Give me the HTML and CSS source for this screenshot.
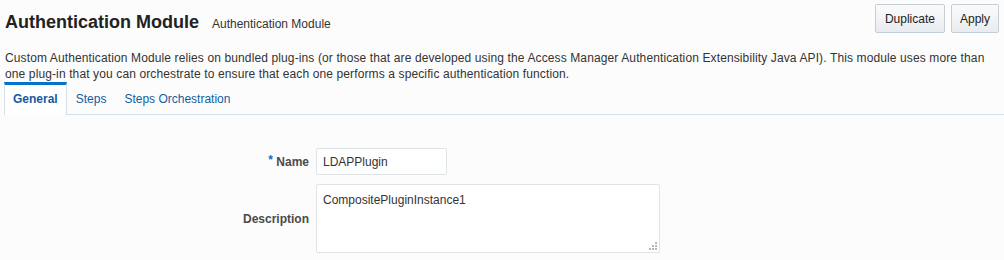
FILE: index.html
```html
<!DOCTYPE html>
<html>
<head>
<meta charset="utf-8">
<link rel="stylesheet" href="styles.css">
</head>
<body>
<div class="page">
  <div class="header">
    <div class="titles">
      <h1 class="title">Authentication Module</h1>
      <span class="subtitle">Authentication Module</span>
    </div>
    <div class="actions">
      <button class="btn btn-dup">Duplicate</button>
      <button class="btn">Apply</button>
    </div>
  </div>
  <p class="desc">Custom Authentication Module relies on bundled plug-ins (or those that are developed using the Access Manager Authentication Extensibility Java API). This module uses more than one plug-in that you can orchestrate to ensure that each one performs a specific authentication function.</p>
  <div class="tabs">
    <div class="tab active">General</div>
    <div class="tab">Steps</div>
    <div class="tab">Steps Orchestration</div>
  </div>
  <div class="form">
    <label class="label"><span class="req">*</span> Name</label>
    <div class="field"><input class="input" type="text" value="LDAPPlugin"></div>
    <label class="label label-desc">Description</label>
    <div class="field area-wrap">
      <textarea class="textarea">CompositePluginInstance1</textarea>
      <svg class="grip" width="10" height="10" viewBox="0 0 10 10">
        <rect x="7" y="1" width="2" height="2" fill="#b8b8b8"/>
        <rect x="4" y="4" width="2" height="2" fill="#b8b8b8"/>
        <rect x="7" y="4" width="2" height="2" fill="#b8b8b8"/>
        <rect x="1" y="7" width="2" height="2" fill="#b8b8b8"/>
        <rect x="4" y="7" width="2" height="2" fill="#b8b8b8"/>
        <rect x="7" y="7" width="2" height="2" fill="#b8b8b8"/>
      </svg>
    </div>
  </div>
</div>
</body>
</html>
```
FILE: styles.css
```css
html, body {
  margin: 0;
  padding: 0;
  background: #fcfcfc;
}
.page {
  font-family: "Liberation Sans", Arial, sans-serif;
  font-size: 12px;
  color: #333;
  padding: 0 5px 0 5px;
}
.header {
  display: flex;
  justify-content: space-between;
  align-items: flex-start;
  padding-top: 4px;
}
.titles {
  display: flex;
  align-items: baseline;
  gap: 13px;
  padding-top: 6px;
}
.title {
  margin: 0;
  font-size: 18px;
  font-weight: bold;
  color: #222;
  line-height: 24px;
}
.subtitle {
  font-size: 12px;
  color: #333;
}
.actions {
  display: flex;
  gap: 6px;
}
.btn {
  font-family: "Liberation Sans", Arial, sans-serif;
  font-size: 12px;
  color: #222;
  height: 29px;
  padding: 0 8px;
  border: 1px solid #c4ced7;
  border-radius: 2px;
  background: linear-gradient(#fbfbfb, #e8ecf0);
}
.btn-dup {
  padding: 0 9px;
}
.desc {
  margin: 0;
  padding-top: 16px;
  line-height: 16px;
  color: #333;
  letter-spacing: 0.12px;
}
.tabs {
  display: flex;
  margin-top: 0;
  margin-left: -1px;
  margin-right: -5px;
  border-bottom: 1px solid #d6dfe6;
  height: 32px;
}
.tab {
  padding: 0 8px;
  line-height: 29px;
  color: #145c9e;
  border-top: 3px solid transparent;
  border-left: 1px solid transparent;
  border-right: 1px solid transparent;
}
.tab.active {
  font-weight: bold;
  border-top-color: #0572ce;
  border-left-color: #d6dfe6;
  border-right-color: #d6dfe6;
  background: #fff;
  margin-bottom: -1px;
}
.form {
  display: grid;
  grid-template-columns: 304px auto;
  column-gap: 7px;
  row-gap: 9px;
  margin-top: 33px;
  align-items: center;
}
.label {
  text-align: right;
  font-weight: bold;
  color: #4a4a4a;
}
.req {
  color: #0572ce;
  font-weight: bold;
  vertical-align: top;
  position: relative;
  top: -2px;
}
.field {
  display: flex;
}
.input {
  width: 131px;
  height: 27px;
  box-sizing: border-box;
  border: 1px solid #dfe4e7;
  border-radius: 2px;
  padding: 0 6px;
  font-family: "Liberation Sans", Arial, sans-serif;
  font-size: 12px;
  color: #333;
  background: #fff;
}
.area-wrap {
  position: relative;
  width: 344px;
}
.textarea {
  width: 344px;
  height: 69px;
  box-sizing: border-box;
  border: 1px solid #dfe4e7;
  border-radius: 2px;
  padding: 8px 6px;
  font-family: "Liberation Sans", Arial, sans-serif;
  font-size: 12px;
  color: #333;
  background: #fff;
  resize: none;
}
.grip {
  position: absolute;
  right: 2px;
  bottom: 2px;
}
```
